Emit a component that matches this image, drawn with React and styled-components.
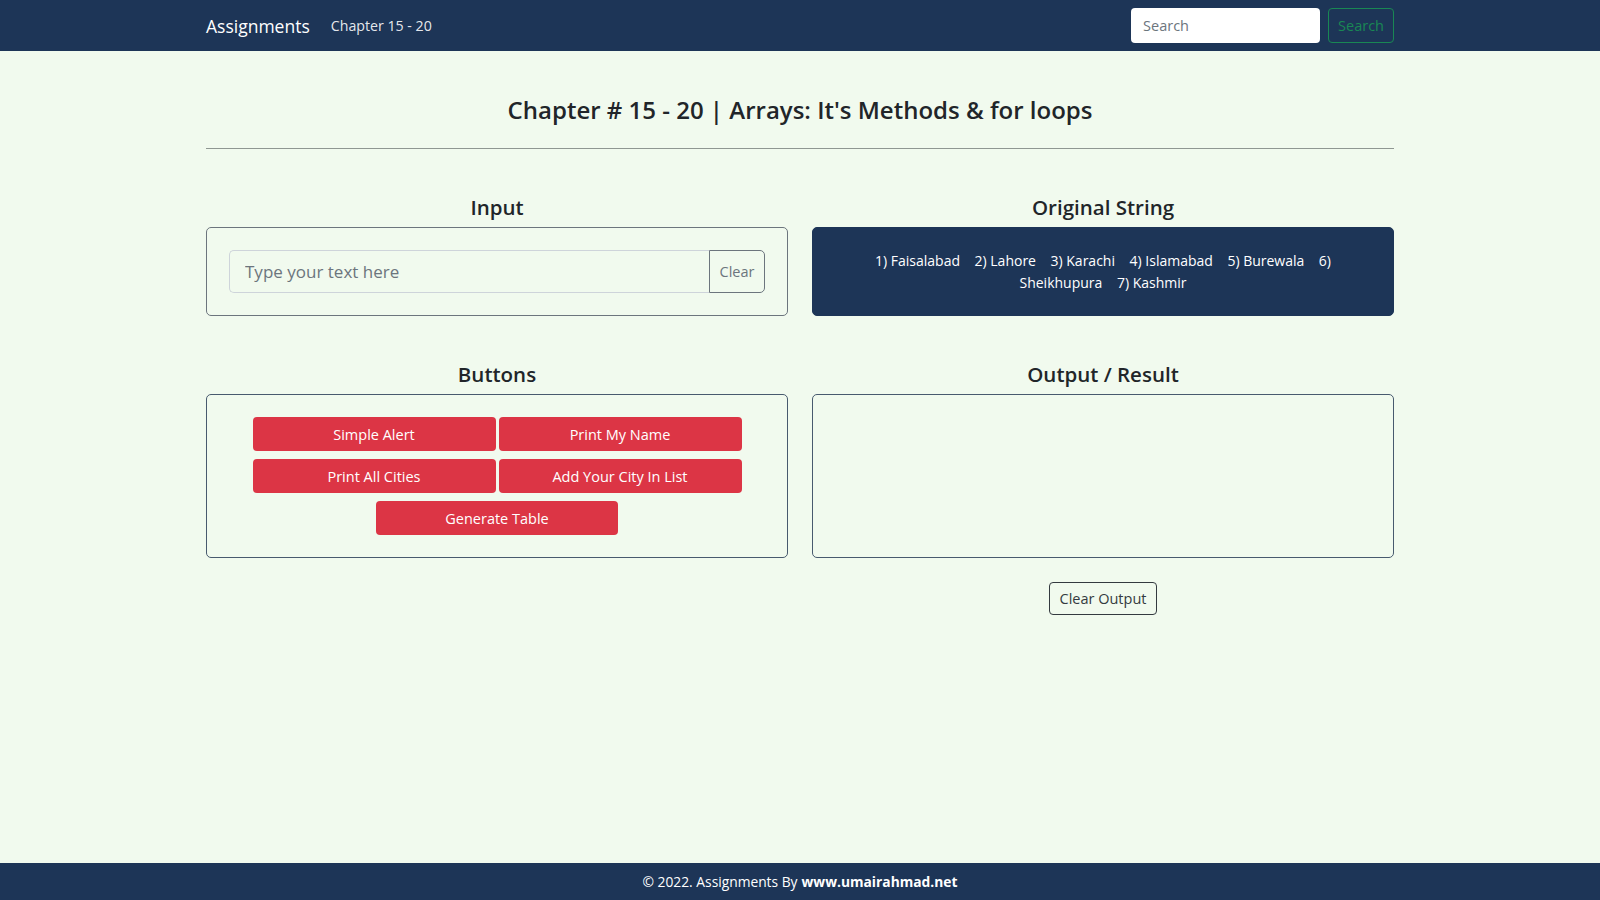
import React from "react";
import styled, { createGlobalStyle } from "styled-components";

const GlobalStyle = createGlobalStyle`
  * { box-sizing: border-box; }
  html, body { margin: 0; padding: 0; }
  body {
    background: #f1faee;
    font-family: "Open Sans", "Noto Sans", sans-serif;
    color: #212529;
  }
`;

const Page = styled.div`
  min-height: 100vh;
  display: flex;
  flex-direction: column;
`;

const NavBar = styled.nav`
  height: 51px;
  background: #1d3557;
  flex-shrink: 0;
`;

const Container = styled.div`
  width: 1188px;
  margin: 0 auto;
`;

const NavInner = styled(Container)`
  height: 100%;
  display: flex;
  align-items: center;
  justify-content: space-between;
`;

const NavLeft = styled.div`
  display: flex;
  align-items: center;
  gap: 21px;
`;

const Brand = styled.a`
  color: #ffffff;
  font-size: 17.5px;
  text-decoration: none;
`;

const NavLink = styled.a`
  color: rgba(255, 255, 255, 0.9);
  font-size: 14.2px;
  text-decoration: none;
`;

const SearchForm = styled.form`
  display: flex;
  align-items: center;
  gap: 8px;
`;

const SearchInput = styled.input`
  width: 189px;
  height: 35px;
  border: none;
  border-radius: 4px;
  background: #ffffff;
  padding: 0 12px;
  font-family: inherit;
  font-size: 14.5px;
  color: #212529;
  outline: none;
  &::placeholder { color: #6c757d; }
`;

const OutlineButton = styled.button`
  height: ${(p) => p.$h || 35}px;
  padding: 0 ${(p) => p.$px || 10}px;
  border: 1px solid ${(p) => p.$color};
  border-radius: 4px;
  background: transparent;
  color: ${(p) => p.$color};
  font-family: inherit;
  font-size: 14.5px;
  cursor: pointer;
`;

const Main = styled(Container)`
  flex: 1;
`;

const Title = styled.h2`
  margin: 42px 0 0;
  font-size: 24px;
  line-height: 34px;
  font-weight: 600;
  text-align: center;
  color: #212529;
`;

const Rule = styled.hr`
  margin: 21px 0 0;
  border: none;
  border-top: 1px solid #8f9792;
`;

const Grid = styled.div`
  display: grid;
  grid-template-columns: 1fr 1fr;
  column-gap: 24px;
  row-gap: ${(p) => p.$rowGap || 0}px;
  margin-top: ${(p) => p.$top || 0}px;
`;

const Section = styled.section`
  display: flex;
  flex-direction: column;
`;

const SectionTitle = styled.h4`
  margin: 0 0 5px;
  font-size: 20.5px;
  line-height: 29px;
  font-weight: 600;
  text-align: center;
  color: #212529;
`;

const Panel = styled.div`
  border: 1px solid ${(p) => (p.$dark ? "#1d3557" : p.$border || "#6c757d")};
  background: ${(p) => (p.$dark ? "#1d3557" : "transparent")};
  border-radius: 5px;
  padding: 22px;
  height: ${(p) => p.$height}px;
`;

const InputGroup = styled.div`
  display: flex;
  height: 43px;
`;

const TextInput = styled.input`
  flex: 1;
  min-width: 0;
  height: 100%;
  border: 1px solid #ced4da;
  border-right: none;
  border-radius: 5px 0 0 5px;
  background: transparent;
  padding: 0 15px;
  font-family: inherit;
  font-size: 17px;
  color: #212529;
  outline: none;
  &::placeholder { color: #6c757d; }
`;

const AttachedButton = styled.button`
  width: 56px;
  height: 100%;
  border: 1px solid #6c757d;
  border-radius: 0 5px 5px 0;
  background: transparent;
  color: #6c757d;
  font-family: inherit;
  font-size: 14.5px;
  padding: 0;
`;

const CityText = styled.p`
  margin: 0;
  color: #ffffff;
  font-size: 14px;
  line-height: 22px;
  text-align: center;
  padding: 0 6px;
`;

const ButtonGrid = styled.div`
  width: 489px;
  margin: 0 auto;
  display: flex;
  flex-wrap: wrap;
  justify-content: center;
  gap: 8px 3px;
`;

const DangerButton = styled.button`
  width: ${(p) => p.$w || 243}px;
  height: 34px;
  border: none;
  border-radius: 4px;
  background: #dc3545;
  color: #ffffff;
  font-family: inherit;
  font-size: 14.5px;
  cursor: pointer;
`;

const ActionCell = styled.div`
  grid-column: 2;
  display: flex;
  justify-content: center;
`;

const Footer = styled.footer`
  height: 37px;
  background: #1d3557;
  color: #ffffff;
  display: flex;
  align-items: center;
  justify-content: center;
  font-size: 13.8px;
  flex-shrink: 0;
`;

const Strong = styled.strong`
  font-weight: 700;
  margin-left: 4px;
`;

const cities = [
  "1) Faisalabad",
  "2) Lahore",
  "3) Karachi",
  "4) Islamabad",
  "5) Burewala",
  "6) Sheikhupura",
  "7) Kashmir",
];

export default function App() {
  const cityLine = cities.join("\u00a0\u00a0\u00a0 ");
  return (
    <Page>
      <GlobalStyle />
      <NavBar>
        <NavInner>
          <NavLeft>
            <Brand href="#">Assignments</Brand>
            <NavLink href="#">Chapter 15 - 20</NavLink>
          </NavLeft>
          <SearchForm onSubmit={(e) => e.preventDefault()}>
            <SearchInput placeholder="Search" />
            <OutlineButton $color="#198754" $px={9}>Search</OutlineButton>
          </SearchForm>
        </NavInner>
      </NavBar>

      <Main>
        <Title>Chapter # 15 - 20 | Arrays: It's Methods &amp; for loops</Title>
        <Rule />

        <Grid $rowGap={44} $top={44}>
          <Section>
            <SectionTitle>Input</SectionTitle>
            <Panel $height={89}>
              <InputGroup>
                <TextInput placeholder="Type your text here" />
                <AttachedButton>Clear</AttachedButton>
              </InputGroup>
            </Panel>
          </Section>

          <Section>
            <SectionTitle>Original String</SectionTitle>
            <Panel $dark $height={89}>
              <CityText>{cityLine}</CityText>
            </Panel>
          </Section>

          <Section>
            <SectionTitle>Buttons</SectionTitle>
            <Panel $border="#485a6e" $height={164}>
              <ButtonGrid>
                <DangerButton>Simple Alert</DangerButton>
                <DangerButton>Print My Name</DangerButton>
                <DangerButton>Print All Cities</DangerButton>
                <DangerButton>Add Your City In List</DangerButton>
                <DangerButton $w={242}>Generate Table</DangerButton>
              </ButtonGrid>
            </Panel>
          </Section>

          <Section>
            <SectionTitle>Output / Result</SectionTitle>
            <Panel $border="#485a6e" $height={164} />
          </Section>
        </Grid>

        <Grid $top={24}>
          <ActionCell>
            <OutlineButton $color="#343a40" $h={33} $px={10}>
              Clear Output
            </OutlineButton>
          </ActionCell>
        </Grid>
      </Main>

      <Footer>
        © 2022. Assignments By<Strong>www.umairahmad.net</Strong>
      </Footer>
    </Page>
  );
}
